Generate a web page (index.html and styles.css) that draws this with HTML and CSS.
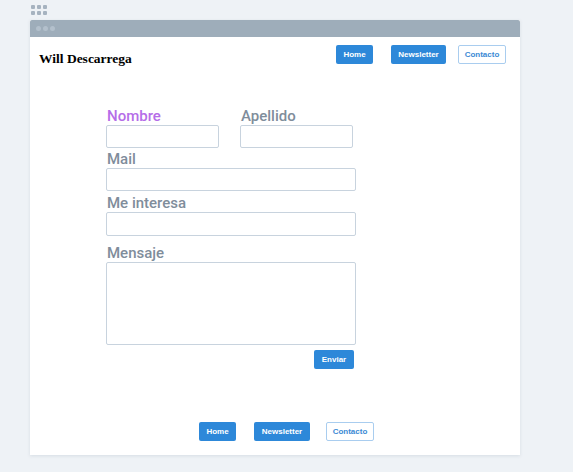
FILE: index.html
```html
<!DOCTYPE html>
<html>
<head>
<meta charset="utf-8">
<link rel="stylesheet" href="styles.css">
</head>
<body>
<div class="grid-icon">
  <span></span><span></span><span></span>
  <span></span><span></span><span></span>
</div>
<div class="window">
  <div class="bar"><span></span><span></span><span></span></div>
  <div class="header">
    <h1 class="title">Will Descarrega</h1>
    <nav class="nav">
      <a class="btn btn-home">Home</a>
      <a class="btn btn-news">Newsletter</a>
      <a class="btn btn-outline">Contacto</a>
    </nav>
  </div>
  <form class="form">
    <div class="row">
      <div class="col">
        <label class="label label-active">Nombre</label>
        <div class="input"></div>
      </div>
      <div class="col">
        <label class="label">Apellido</label>
        <div class="input"></div>
      </div>
    </div>
    <label class="label label-mail">Mail</label>
    <div class="input input-wide"></div>
    <label class="label label-interest">Me interesa</label>
    <div class="input input-wide input-24"></div>
    <label class="label label-msg">Mensaje</label>
    <div class="textarea"></div>
    <div class="send-row"><a class="btn btn-send">Enviar</a></div>
  </form>
  <div class="footer">
    <a class="btn btn-home">Home</a>
    <a class="btn btn-news">Newsletter</a>
    <a class="btn btn-outline">Contacto</a>
  </div>
</div>
</body>
</html>
```
FILE: styles.css
```css
html, body {
  margin: 0;
  padding: 0;
  background: #eef2f6;
}
body {
  width: 573px;
  height: 472px;
  overflow: hidden;
  font-family: "Open Sans", "DejaVu Sans", sans-serif;
}
.grid-icon {
  display: grid;
  grid-template-columns: repeat(3, 4px);
  grid-auto-rows: 4px;
  gap: 2px;
  padding: 5px 0 0 31px;
  height: 10px;
}
.grid-icon span {
  background: #a6b3c0;
  border-radius: 1px;
}
.window {
  margin: 5px 0 0 30px;
  width: 490px;
  height: 435px;
  background: #fff;
  box-shadow: 0 1px 3px rgba(150, 165, 180, 0.25);
  display: flex;
  flex-direction: column;
}
.bar {
  height: 17px;
  background: #9eadba;
  border-radius: 2px 2px 0 0;
  display: flex;
  align-items: center;
  gap: 2px;
  padding-left: 6px;
}
.bar span {
  width: 5px;
  height: 5px;
  border-radius: 50%;
  background: #b3c0cc;
}
.header {
  display: flex;
  justify-content: space-between;
  align-items: flex-start;
  padding: 8px 14px 0 9px;
}
.title {
  margin: 6px 0 0 0;
  font-family: "Liberation Serif", "Times New Roman", serif;
  font-size: 13.5px;
  font-weight: bold;
  color: #000;
  line-height: 16px;
}
.nav {
  display: flex;
}
.btn {
  display: flex;
  align-items: center;
  justify-content: center;
  height: 19px;
  box-sizing: border-box;
  border-radius: 2px;
  font-family: "Liberation Sans", Arial, sans-serif;
  font-size: 8px;
  font-weight: bold;
  color: #fff;
  background: #2d88d9;
}
.nav .btn-home { width: 37px; margin-right: 18px; }
.nav .btn-news { width: 55px; margin-right: 12px; }
.btn-outline {
  width: 48px;
  background: #fff;
  color: #3b8ad4;
  border: 1px solid #a9cdef;
}
.form {
  margin: 41px 0 0 76px;
  width: 250px;
  display: flex;
  flex-direction: column;
}
.row {
  display: flex;
  gap: 21px;
}
.col {
  width: 113px;
  display: flex;
  flex-direction: column;
}
.label {
  font-family: Roboto, "Noto Sans", sans-serif;
  font-size: 15px;
  line-height: 17px;
  height: 17px;
  color: #7f8d9b;
  font-weight: 500;
  padding-left: 1px;
}
.label-active {
  color: #b56de8;
}
.label-mail {
  margin-top: 3px;
}
.label-interest {
  margin-top: 4px;
}
.label-msg {
  margin-top: 9px;
}
.input {
  height: 23px;
  box-sizing: border-box;
  border: 1px solid #c8d3de;
  border-radius: 2px;
  background: #fff;
}
.input-wide { width: 250px; }
.input-24 { height: 24px; }
.textarea {
  width: 250px;
  height: 83px;
  box-sizing: border-box;
  border: 1px solid #c8d3de;
  border-radius: 2px;
}
.send-row {
  display: flex;
  justify-content: flex-end;
  margin-top: 5px;
  padding-right: 2px;
}
.btn-send { width: 40px; }
.footer {
  margin-top: auto;
  margin-bottom: 14px;
  display: flex;
  padding-left: 169px;
}
.footer .btn-home { width: 37px; margin-right: 18px; }
.footer .btn-news { width: 56px; margin-right: 16px; }
```
